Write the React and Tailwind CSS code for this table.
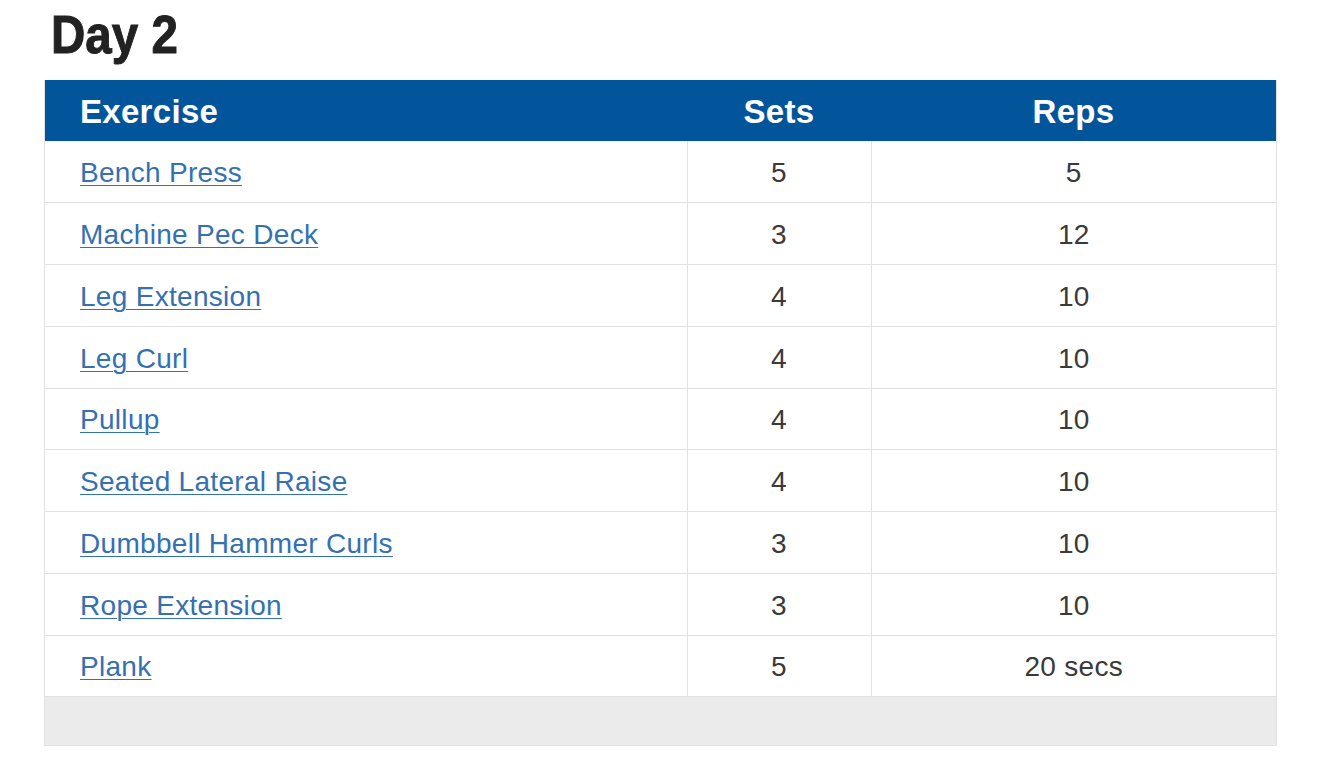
import React from 'react';

const rows = [
    { name: 'Bench Press', sets: '5', reps: '5' },
    { name: 'Machine Pec Deck', sets: '3', reps: '12' },
    { name: 'Leg Extension', sets: '4', reps: '10' },
    { name: 'Leg Curl', sets: '4', reps: '10' },
    { name: 'Pullup', sets: '4', reps: '10' },
    { name: 'Seated Lateral Raise', sets: '4', reps: '10' },
    { name: 'Dumbbell Hammer Curls', sets: '3', reps: '10' },
    { name: 'Rope Extension', sets: '3', reps: '10' },
    { name: 'Plank', sets: '5', reps: '20 secs' },
];

const App = () => {
    return (
        <div className="min-h-[768px] bg-white pl-[44px] pr-[44px] font-['Liberation_Sans',Arial,sans-serif]">
            <h1 className="pt-[4px] pl-[7px] h-[80px] text-[54px] leading-[60px] font-bold text-[#222]">
                <span className="inline-block origin-left scale-x-[0.88] [-webkit-text-stroke:1px_#222]">Day 2</span>
            </h1>

            <div className="w-[1233px] border-x border-b border-[#e2e2e2]">
                <table className="w-full border-collapse table-fixed">
                    <colgroup>
                        <col className="w-[642px]" />
                        <col className="w-[184px]" />
                        <col />
                    </colgroup>
                    <thead>
                        <tr className="h-[61px] bg-[#02559b] text-white text-[33px] tracking-[0.3px] font-bold">
                            <th className="text-left pl-[35px] pt-[2px] font-bold">Exercise</th>
                            <th className="text-center pt-[2px] font-bold">Sets</th>
                            <th className="text-center pt-[2px] font-bold">Reps</th>
                        </tr>
                    </thead>
                    <tbody>
                        {rows.map((r) => (
                            <tr key={r.name} className="h-[61.75px] border-b border-[#e2e2e2] text-[28px] tracking-[0.3px] text-[#3a3a3a]">
                                <td className="pl-[35px] pt-[3px]">
                                    <a href="#" className="text-[#3570b2] underline underline-offset-[3px] decoration-1">
                                        {r.name}
                                    </a>
                                </td>
                                <td className="text-center pt-[3px] border-l border-[#e2e2e2]">{r.sets}</td>
                                <td className="text-center pt-[3px] border-l border-[#e2e2e2]">{r.reps}</td>
                            </tr>
                        ))}
                    </tbody>
                </table>
                <div className="h-[48px] bg-[#ebebeb]" />
            </div>
        </div>
    );
};

export default App;
